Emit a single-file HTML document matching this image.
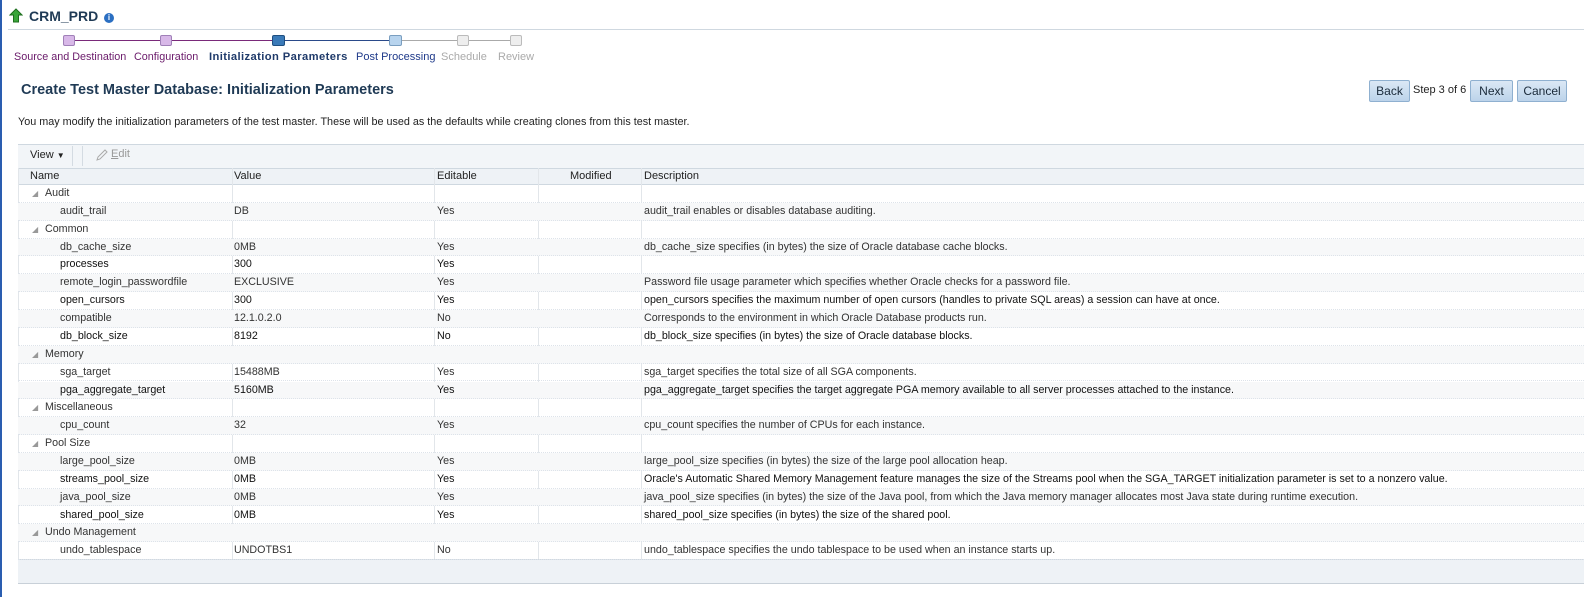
<!DOCTYPE html>
<html><head><meta charset="utf-8"><style>
*{margin:0;padding:0;box-sizing:border-box}
body{width:1584px;height:597px;background:#fff;font-family:"Liberation Sans",sans-serif;font-size:11px;color:#333;position:relative;overflow:hidden}
.a{position:absolute;white-space:nowrap}
.lb{position:absolute;left:0;top:0;width:2px;height:597px;background:#2a5db0}
.btn{position:absolute;top:80px;height:22px;border:1px solid #8fb0d0;border-radius:2px;background:linear-gradient(#dbe8f5,#bcd3ea);color:#1a2a3a;font-size:12px;text-align:center;line-height:20px}
.row{position:absolute;left:18px;width:1566px;height:17.86px;border-bottom:1px dotted #dde3ea;line-height:17px;font-size:10.7px}
.row span{position:absolute;top:0}
.alt{background:#f7f8f9}
.dk{color:#111}
.cl{position:absolute;top:168px;height:391px;border-left:1px solid #e2e6ea}
</style></head><body>
<div class="lb"></div>
<svg class="a" style="left:9px;top:8px" width="14" height="15" viewBox="0 0 14 15"><path d="M7 1 L13 7 H9.5 V14 H4.5 V7 H1 Z" fill="#3aa63a" stroke="#1d6e1d" stroke-width="1"/></svg>
<div class="a" style="left:29px;top:8px;font-size:14px;font-weight:bold;color:#1f3a55">CRM_PRD</div>
<div class="a" style="left:104px;top:13px;width:10px;height:10px;border-radius:50%;background:#2b6fc2;color:#fff;font-size:8px;text-align:center;line-height:10px;font-weight:bold">i</div>
<div class="a" style="left:8px;top:29px;width:1576px;height:1px;background:#cfd8e0"></div>
<div class="a" style="left:69px;top:40px;width:210px;height:1px;background:#7a2a7a"></div>
<div class="a" style="left:279px;top:40px;width:117px;height:1px;background:#2a4a8a"></div>
<div class="a" style="left:396px;top:40px;width:120px;height:1px;background:#aaa"></div>
<div class="a" style="left:63px;top:35px;width:12px;height:11px;border-radius:2px;background:#d8b8e8;border:1px solid #a080b8"></div>
<div class="a" style="left:160px;top:35px;width:12px;height:11px;border-radius:2px;background:#d8b8e8;border:1px solid #a080b8"></div>
<div class="a" style="left:272px;top:35px;width:13px;height:11px;border-radius:2px;background:#3a7ab8;border:1px solid #1f4f80"></div>
<div class="a" style="left:389px;top:35px;width:13px;height:11px;border-radius:2px;background:#b8d4ee;border:1px solid #7a9ec0"></div>
<div class="a" style="left:457px;top:35px;width:12px;height:11px;border-radius:2px;background:#eee;border:1px solid #bbb"></div>
<div class="a" style="left:510px;top:35px;width:12px;height:11px;border-radius:2px;background:#eee;border:1px solid #bbb"></div>
<div class="a" style="left:14px;top:51px;font-size:10.8px;color:#6a1a6a">Source and Destination</div>
<div class="a" style="left:134px;top:51px;font-size:10.8px;color:#6a1a6a">Configuration</div>
<div class="a" style="left:209px;top:51px;color:#1f3a6a;font-weight:bold;font-size:11.2px;letter-spacing:0.4px">Initialization Parameters</div>
<div class="a" style="left:356px;top:51px;color:#1f3a8a">Post Processing</div>
<div class="a" style="left:441px;top:51px;color:#aaa">Schedule</div>
<div class="a" style="left:498px;top:51px;color:#aaa">Review</div>
<div class="a" style="left:21px;top:82px;font-size:14.5px;font-weight:bold;color:#1f3a55">Create Test Master Database: Initialization Parameters</div>
<div class="btn" style="left:1369px;width:41px">Back</div>
<div class="a" style="left:1413px;top:84px;font-size:11px;color:#222">Step 3 of 6</div>
<div class="btn" style="left:1470px;width:43px">Next</div>
<div class="btn" style="left:1517px;width:50px">Cancel</div>
<div class="a" style="left:18px;top:116px;color:#222;font-size:10.8px">You may modify the initialization parameters of the test master. These will be used as the defaults while creating clones from this test master.</div>
<div class="a" style="left:18px;top:144px;width:1566px;height:24px;background:#f2f5f8;border-top:1px solid #cfd8e0"></div>
<div class="a" style="left:30px;top:149px;color:#222">View <span style="font-size:8px">▼</span></div>
<div class="a" style="left:72px;top:146px;width:1px;height:20px;background:#d4dbe2"></div>
<div class="a" style="left:82px;top:146px;width:1px;height:20px;background:#d4dbe2"></div>
<svg class="a" style="left:95px;top:148px" width="14" height="14"><path d="M2 12 L3 9 L10 2 L12 4 L5 11 Z" fill="none" stroke="#aaa"/></svg>
<div class="a" style="left:111px;top:148px;color:#999"><u>E</u>dit</div>
<div class="a" style="left:18px;top:168px;width:1566px;height:17px;background:#eef2f6;border-top:1px solid #cfd8e0;border-bottom:1px solid #cfd8e0"></div>
<div class="a" style="left:30px;top:170px;color:#222">Name</div>
<div class="a" style="left:234px;top:170px;color:#222">Value</div>
<div class="a" style="left:437px;top:170px;color:#222">Editable</div>
<div class="a" style="left:570px;top:170px;color:#222">Modified</div>
<div class="a" style="left:644px;top:170px;color:#222">Description</div>
<div class="cl" style="left:232px"></div>
<div class="cl" style="left:434px"></div>
<div class="cl" style="left:538px"></div>
<div class="cl" style="left:641px"></div>
<div class="cl" style="left:18px"></div>
<div class="a" style="left:18px;top:559px;width:1566px;height:25px;background:#eef2f6;border-top:1px solid #d0d8e0;border-bottom:1px solid #c8d0d8"></div>
<div style="position:absolute;left:0;top:0">
<div class="row" style="top:185px"><span style="left:14px;font-size:8px;color:#999">◢</span><span style="left:27px">Audit</span></div>
<div class="row alt" style="top:202.9px"><span style="left:42px">audit_trail</span><span style="left:216px">DB</span><span style="left:419px">Yes</span><span style="left:626px">audit_trail enables or disables database auditing.</span></div>
<div class="row" style="top:220.7px"><span style="left:14px;font-size:8px;color:#999">◢</span><span style="left:27px">Common</span></div>
<div class="row alt" style="top:238.6px"><span style="left:42px">db_cache_size</span><span style="left:216px">0MB</span><span style="left:419px">Yes</span><span style="left:626px">db_cache_size specifies (in bytes) the size of Oracle database cache blocks.</span></div>
<div class="row dk" style="top:256.4px"><span style="left:42px">processes</span><span style="left:216px">300</span><span style="left:419px">Yes</span></div>
<div class="row alt" style="top:274.3px"><span style="left:42px">remote_login_passwordfile</span><span style="left:216px">EXCLUSIVE</span><span style="left:419px">Yes</span><span style="left:626px">Password file usage parameter which specifies whether Oracle checks for a password file.</span></div>
<div class="row dk" style="top:292.2px"><span style="left:42px">open_cursors</span><span style="left:216px">300</span><span style="left:419px">Yes</span><span style="left:626px">open_cursors specifies the maximum number of open cursors (handles to private SQL areas) a session can have at once.</span></div>
<div class="row alt" style="top:310px"><span style="left:42px">compatible</span><span style="left:216px">12.1.0.2.0</span><span style="left:419px">No</span><span style="left:626px">Corresponds to the environment in which Oracle Database products run.</span></div>
<div class="row dk" style="top:327.9px"><span style="left:42px">db_block_size</span><span style="left:216px">8192</span><span style="left:419px">No</span><span style="left:626px">db_block_size specifies (in bytes) the size of Oracle database blocks.</span></div>
<div class="row alt" style="top:345.7px"><span style="left:14px;font-size:8px;color:#999">◢</span><span style="left:27px">Memory</span></div>
<div class="row" style="top:363.6px"><span style="left:42px">sga_target</span><span style="left:216px">15488MB</span><span style="left:419px">Yes</span><span style="left:626px">sga_target specifies the total size of all SGA components.</span></div>
<div class="row alt dk" style="top:381.5px"><span style="left:42px">pga_aggregate_target</span><span style="left:216px">5160MB</span><span style="left:419px">Yes</span><span style="left:626px">pga_aggregate_target specifies the target aggregate PGA memory available to all server processes attached to the instance.</span></div>
<div class="row" style="top:399.3px"><span style="left:14px;font-size:8px;color:#999">◢</span><span style="left:27px">Miscellaneous</span></div>
<div class="row alt" style="top:417.2px"><span style="left:42px">cpu_count</span><span style="left:216px">32</span><span style="left:419px">Yes</span><span style="left:626px">cpu_count specifies the number of CPUs for each instance.</span></div>
<div class="row" style="top:435px"><span style="left:14px;font-size:8px;color:#999">◢</span><span style="left:27px">Pool Size</span></div>
<div class="row alt" style="top:452.9px"><span style="left:42px">large_pool_size</span><span style="left:216px">0MB</span><span style="left:419px">Yes</span><span style="left:626px">large_pool_size specifies (in bytes) the size of the large pool allocation heap.</span></div>
<div class="row dk" style="top:470.8px"><span style="left:42px">streams_pool_size</span><span style="left:216px">0MB</span><span style="left:419px">Yes</span><span style="left:626px">Oracle's Automatic Shared Memory Management feature manages the size of the Streams pool when the SGA_TARGET initialization parameter is set to a nonzero value.</span></div>
<div class="row alt" style="top:488.6px"><span style="left:42px">java_pool_size</span><span style="left:216px">0MB</span><span style="left:419px">Yes</span><span style="left:626px">java_pool_size specifies (in bytes) the size of the Java pool, from which the Java memory manager allocates most Java state during runtime execution.</span></div>
<div class="row dk" style="top:506.5px"><span style="left:42px">shared_pool_size</span><span style="left:216px">0MB</span><span style="left:419px">Yes</span><span style="left:626px">shared_pool_size specifies (in bytes) the size of the shared pool.</span></div>
<div class="row alt" style="top:524.3px"><span style="left:14px;font-size:8px;color:#999">◢</span><span style="left:27px">Undo Management</span></div>
<div class="row" style="top:542.2px"><span style="left:42px">undo_tablespace</span><span style="left:216px">UNDOTBS1</span><span style="left:419px">No</span><span style="left:626px">undo_tablespace specifies the undo tablespace to be used when an instance starts up.</span></div>
</div>
</body></html>
